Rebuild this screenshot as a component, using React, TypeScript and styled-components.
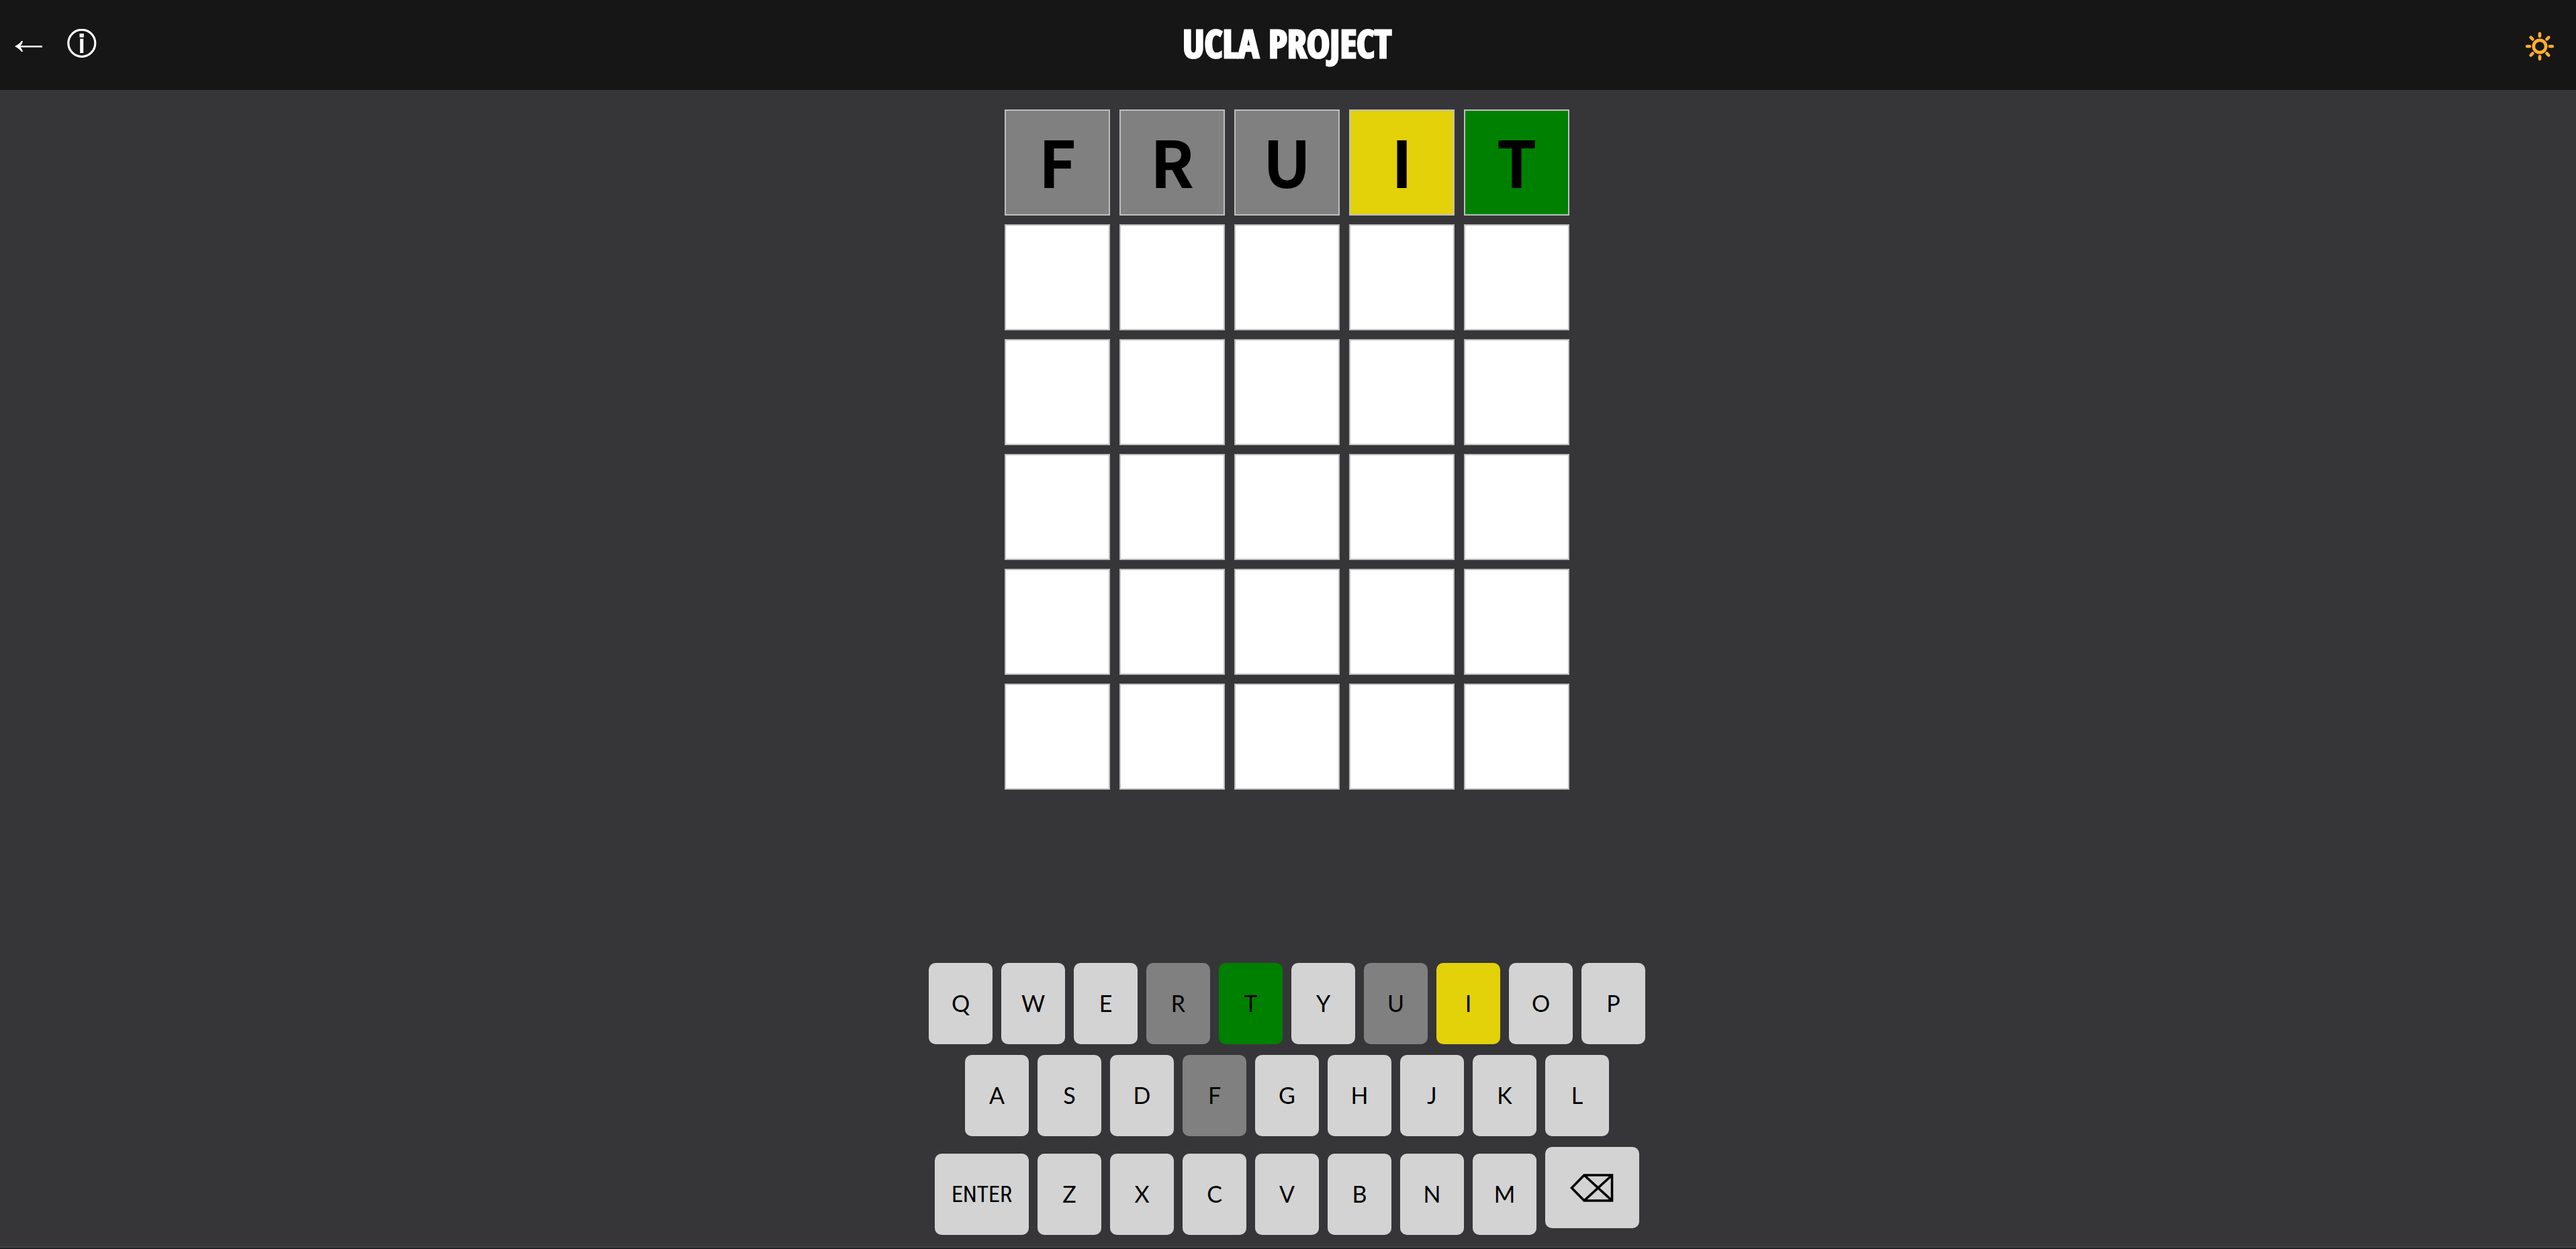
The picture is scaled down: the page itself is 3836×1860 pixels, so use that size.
import styled, { createGlobalStyle } from "styled-components";

type Status = "absent" | "present" | "correct";

const palette = {
  bar: "#161616",
  page: "#363638",
  key: "#d3d3d3",
  tile: "#ffffff",
  tileBorder: "#bebebe",
  sun: "#ffae2e",
};

const statusColors: Record<Status, string> = {
  absent: "#808080",
  present: "#e3d10a",
  correct: "#008000",
};

const GlobalStyle = createGlobalStyle`
  *, *::before, *::after {
    box-sizing: border-box;
  }
  body {
    margin: 0;
    background: ${palette.page};
    font-family: Lato, "Liberation Sans", sans-serif;
  }
`;

const Page = styled.div`
  display: flex;
  flex-direction: column;
  min-height: 100vh;
  background: ${palette.page};
`;

const Header = styled.header`
  display: grid;
  grid-template-columns: 1fr auto 1fr;
  align-items: center;
  height: 134px;
  padding: 0 32px 0 22px;
  background: ${palette.bar};
`;

const Actions = styled.div<{ $end?: boolean }>`
  display: flex;
  gap: 34px;
  justify-content: ${(p) => (p.$end ? "flex-end" : "flex-start")};
`;

const IconButton = styled.button`
  display: flex;
  padding: 0;
  border: none;
  background: none;
  color: #ffffff;
  cursor: pointer;
`;

const Title = styled.h1`
  margin: 0;
  padding: 0 0 6px 7px;
  color: #ffffff;
  font-family: "Open Sans Condensed", "Roboto Condensed", sans-serif;
  font-size: 58px;
  font-weight: 700;
  line-height: 80px;
  -webkit-text-stroke: 3px #ffffff;
`;

const Main = styled.main`
  flex: 1;
  display: flex;
  flex-direction: column;
  align-items: center;
  justify-content: space-between;
  gap: 32px;
  padding: 29px 3px 17px 0;
`;

const Board = styled.div`
  display: grid;
  grid-template-columns: repeat(5, 157px);
  grid-auto-rows: 158px;
  gap: 13px 14px;
`;

const Tile = styled.div<{ $status?: Status }>`
  display: flex;
  align-items: center;
  justify-content: center;
  padding-bottom: 6px;
  border: 2px solid ${palette.tileBorder};
  background: ${(p) => (p.$status ? statusColors[p.$status] : palette.tile)};
  color: #000000;
  font-family: "Noto Sans CJK JP", Roboto, sans-serif;
  font-size: 96px;
  font-weight: 700;
  line-height: 120px;
`;

const Keyboard = styled.div`
  display: flex;
  flex-direction: column;
  gap: 16px;
`;

const KeyRow = styled.div<{ $tall?: boolean }>`
  display: flex;
  align-items: flex-end;
  justify-content: center;
  gap: 13px;
  min-height: ${(p) => (p.$tall ? 131 : 121)}px;
`;

const Key = styled.button<{ $status?: Status }>`
  display: flex;
  align-items: center;
  justify-content: center;
  width: 95px;
  height: 121px;
  padding: 0 0 2px;
  border: none;
  border-radius: 10px;
  background: ${(p) => (p.$status ? statusColors[p.$status] : palette.key)};
  color: #000000;
  font-family: Lato, "Liberation Sans", sans-serif;
  font-size: 34px;
  line-height: 40px;
  cursor: pointer;
`;

const EnterKey = styled(Key)`
  width: 140px;
  font-family: "Roboto Condensed", Lato, sans-serif;
`;

const BackspaceKey = styled(Key)`
  align-self: flex-start;
  width: 140px;
  padding: 0;
`;

const BottomEdge = styled.footer`
  height: 4px;
  border-top: 2px solid #404546;
  background: #1d2325;
`;

const BackIcon = () => (
  <svg width="44" height="48" viewBox="0 0 44 48" aria-hidden="true">
    <path
      d="M0 26 C4 24 8 21 10 18 L12 18 C11.500 21 10 23 8.500 25 L41 25 L41 27.500 L8.500 27.500 C10 29.500 11.500 31 12 34 L10 34 C8 31 4 28 0 26 Z"
      fill="currentColor"
    />
  </svg>
);

const InfoIcon = () => (
  <svg width="44" height="48" viewBox="0 0 44 48" aria-hidden="true">
    <circle cx="21.800" cy="21.300" r="20" fill="none" stroke="currentColor" strokeWidth="3.200" />
    <rect x="18.500" y="7" width="6.300" height="5.600" fill="currentColor" />
    <rect x="19.200" y="14.700" width="5" height="21.300" fill="currentColor" />
  </svg>
);

const rayAngles = [0, 45, 90, 135, 180, 225, 270, 315];

const SunIcon = () => (
  <svg width="44" height="48" viewBox="0 0 44 48" aria-hidden="true">
    <g fill="none" stroke={palette.sun} strokeWidth="4.700" strokeLinecap="round">
      <circle cx="22" cy="26" r="9.200" />
      {rayAngles.map((angle) => (
        <path key={angle} d="M22 11 V7.200" transform={`rotate(${angle} 22 26)`} />
      ))}
    </g>
  </svg>
);

const BackspaceIcon = () => (
  <svg width="66" height="42" viewBox="0 0 66 42" aria-hidden="true">
    <path
      d="M2.500 21 L21 2 H62.500 V40 H21 Z M21 2 L62.500 40 M62.500 2 L21 40"
      fill="none"
      stroke="currentColor"
      strokeWidth="3.600"
    />
  </svg>
);

const guess: { letter: string; status: Status }[] = [
  { letter: "F", status: "absent" },
  { letter: "R", status: "absent" },
  { letter: "U", status: "absent" },
  { letter: "I", status: "present" },
  { letter: "T", status: "correct" },
];

const emptyTiles = Array.from({ length: 25 }, (_, i) => i);

const statusOf = (letter: string) => guess.find((g) => g.letter === letter)?.status;

const Letters = ({ letters }: { letters: string }) => (
  <>
    {letters.split("").map((letter) => (
      <Key key={letter} type="button" $status={statusOf(letter)}>
        {letter}
      </Key>
    ))}
  </>
);

export default function App() {
  return (
    <Page>
      <GlobalStyle />
      <Header>
        <Actions>
          <IconButton type="button" aria-label="Back">
            <BackIcon />
          </IconButton>
          <IconButton type="button" aria-label="Info">
            <InfoIcon />
          </IconButton>
        </Actions>
        <Title>UCLA PROJECT</Title>
        <Actions $end>
          <IconButton type="button" aria-label="Toggle theme">
            <SunIcon />
          </IconButton>
        </Actions>
      </Header>
      <Main>
        <Board>
          {guess.map((g) => (
            <Tile key={g.letter} $status={g.status}>
              {g.letter}
            </Tile>
          ))}
          {emptyTiles.map((i) => (
            <Tile key={i} />
          ))}
        </Board>
        <Keyboard>
          <KeyRow>
            <Letters letters="QWERTYUIOP" />
          </KeyRow>
          <KeyRow>
            <Letters letters="ASDFGHJKL" />
          </KeyRow>
          <KeyRow $tall>
            <EnterKey type="button">ENTER</EnterKey>
            <Letters letters="ZXCVBNM" />
            <BackspaceKey type="button" aria-label="Backspace">
              <BackspaceIcon />
            </BackspaceKey>
          </KeyRow>
        </Keyboard>
      </Main>
      <BottomEdge />
    </Page>
  );
}
